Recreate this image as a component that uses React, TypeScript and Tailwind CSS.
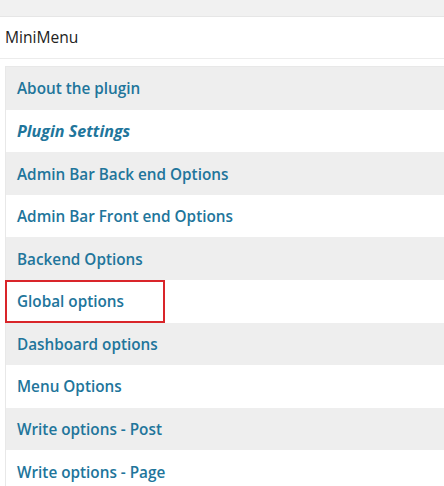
import React from "react";

const items = [
  "About the plugin",
  "Plugin Settings",
  "Admin Bar Back end Options",
  "Admin Bar Front end Options",
  "Backend Options",
  "Global options",
  "Dashboard options",
  "Menu Options",
  "Write options - Post",
  "Write options - Page",
];

export default function App() {
  return (
    <div className="w-[444px] h-[486px] overflow-hidden bg-white" style={{ fontFamily: '"Open Sans", "Noto Sans", sans-serif' }}>
      <div className="h-[17px] bg-[#f1f1f1] border-b border-[#e6e6e6]" />
      <div className="h-[42px] flex items-center pl-[5px] text-[15.6px] text-[#222] border-b border-[#ececec]">MiniMenu</div>
      <div className="h-[7px]" />
      <div className="ml-[5px] border-l border-t border-[#e8e8e8]">
        {items.map((t, i) => (
          <div
            key={t}
            className={`relative h-[42.6px] flex items-center pl-[11px] pt-[1px] text-[#21759b] ${i % 2 === 0 ? "bg-[#eeeeee]" : "bg-white"} ${i === 1 ? "italic font-bold text-[16.1px]" : "font-semibold text-[15.3px]"}`}
          >
            {t}
            {i === 5 && (
              <div className="absolute left-[-1px] top-0 w-[160px] h-[43px] border-2 border-[#d9252a]" />
            )}
          </div>
        ))}
      </div>
    </div>
  );
}
